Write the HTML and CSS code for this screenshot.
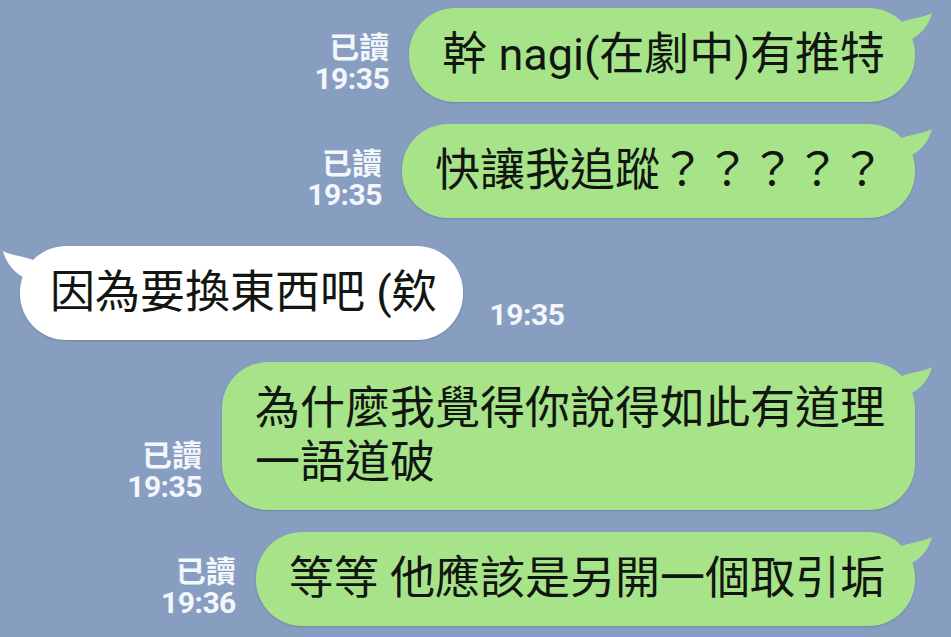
FILE: index.html
```html
<!DOCTYPE html>
<html lang="zh-Hant">
<head>
<meta charset="utf-8">
<title>LINE chat</title>
<link rel="stylesheet" href="styles.css">
</head>
<body>
<main class="chat">
  <div class="row row-out">
    <div class="status"><span class="read">已讀</span><span class="time">19:35</span></div>
    <div class="bubble bubble-out">幹 nagi(在劇中)有推特<svg class="tail tail-out" viewBox="0 0 45 40" width="45" height="40"><path d="M0 22 C10 10 28 12 42 5 C39 17 31 26 22 31 L0 40 Z"/></svg></div>
  </div>
  <div class="row row-out">
    <div class="status"><span class="read">已讀</span><span class="time">19:35</span></div>
    <div class="bubble bubble-out">快讓我追蹤？？？？？<svg class="tail tail-out" viewBox="0 0 45 40" width="45" height="40"><path d="M0 22 C10 10 28 12 42 5 C39 17 31 26 22 31 L0 40 Z"/></svg></div>
  </div>
  <div class="row row-in">
    <div class="bubble bubble-in">因為要換東西吧 (欸<svg class="tail tail-in" viewBox="0 0 45 40" width="45" height="40"><path d="M0 22 C10 10 28 12 42 5 C39 17 31 26 22 31 L0 40 Z"/></svg></div>
    <div class="status status-in"><span class="time">19:35</span></div>
  </div>
  <div class="row row-out">
    <div class="status"><span class="read">已讀</span><span class="time">19:35</span></div>
    <div class="bubble bubble-out">為什麼我覺得你說得如此有道理<br>一語道破<svg class="tail tail-out" viewBox="0 0 45 40" width="45" height="40"><path d="M0 22 C10 10 28 12 42 5 C39 17 31 26 22 31 L0 40 Z"/></svg></div>
  </div>
  <div class="row row-out">
    <div class="status"><span class="read">已讀</span><span class="time">19:36</span></div>
    <div class="bubble bubble-out">等等 他應該是另開一個取引垢<svg class="tail tail-out" viewBox="0 0 45 40" width="45" height="40"><path d="M0 22 C10 10 28 12 42 5 C39 17 31 26 22 31 L0 40 Z"/></svg></div>
  </div>
</main>
</body>
</html>
```
FILE: styles.css
```css
html, body {
  margin: 0;
  padding: 0;
  background: #879ec1;
}
body {
  width: 951px;
  height: 637px;
  overflow: hidden;
  font-family: Roboto, "Noto Sans CJK TC", sans-serif;
}
.chat {
  display: flex;
  flex-direction: column;
  gap: 22px;
  padding: 8px 36px 0 20px;
}
.row {
  display: flex;
  align-items: flex-end;
  gap: 20px;
}
.row-out {
  justify-content: flex-end;
}
.row-in {
  justify-content: flex-start;
  margin-top: 6px;
  gap: 27px;
}
.bubble {
  position: relative;
  font-size: 45px;
  line-height: 54px;
  color: #111611;
  padding: 20px 30px 20px 33px;
  border-radius: 46px;
  white-space: nowrap;
  box-shadow: 0 1px 2px rgba(40, 60, 90, 0.25);
}
.bubble-out {
  background: #a7e489;
}
.bubble-in {
  background: #ffffff;
  padding: 20px 26px 20px 30px;
}
.tail {
  position: absolute;
  top: 0;
}
.tail-out {
  left: calc(100% - 25px);
  fill: #a7e489;
}
.tail-in {
  right: calc(100% - 25px);
  fill: #ffffff;
  transform: scaleX(-1);
}
.status {
  display: flex;
  flex-direction: column;
  align-items: flex-end;
  color: #f3f6fb;
  font-weight: 700;
  font-size: 30px;
  margin-bottom: 6px;
}
.status-in {
  margin-bottom: 8px;
}
.read {
  display: block;
  line-height: 34px;
  font-family: "Noto Sans CJK TC", sans-serif;
}
.time {
  display: block;
  line-height: 34px;
  font-family: Roboto, sans-serif;
  letter-spacing: -0.5px;
}
```
